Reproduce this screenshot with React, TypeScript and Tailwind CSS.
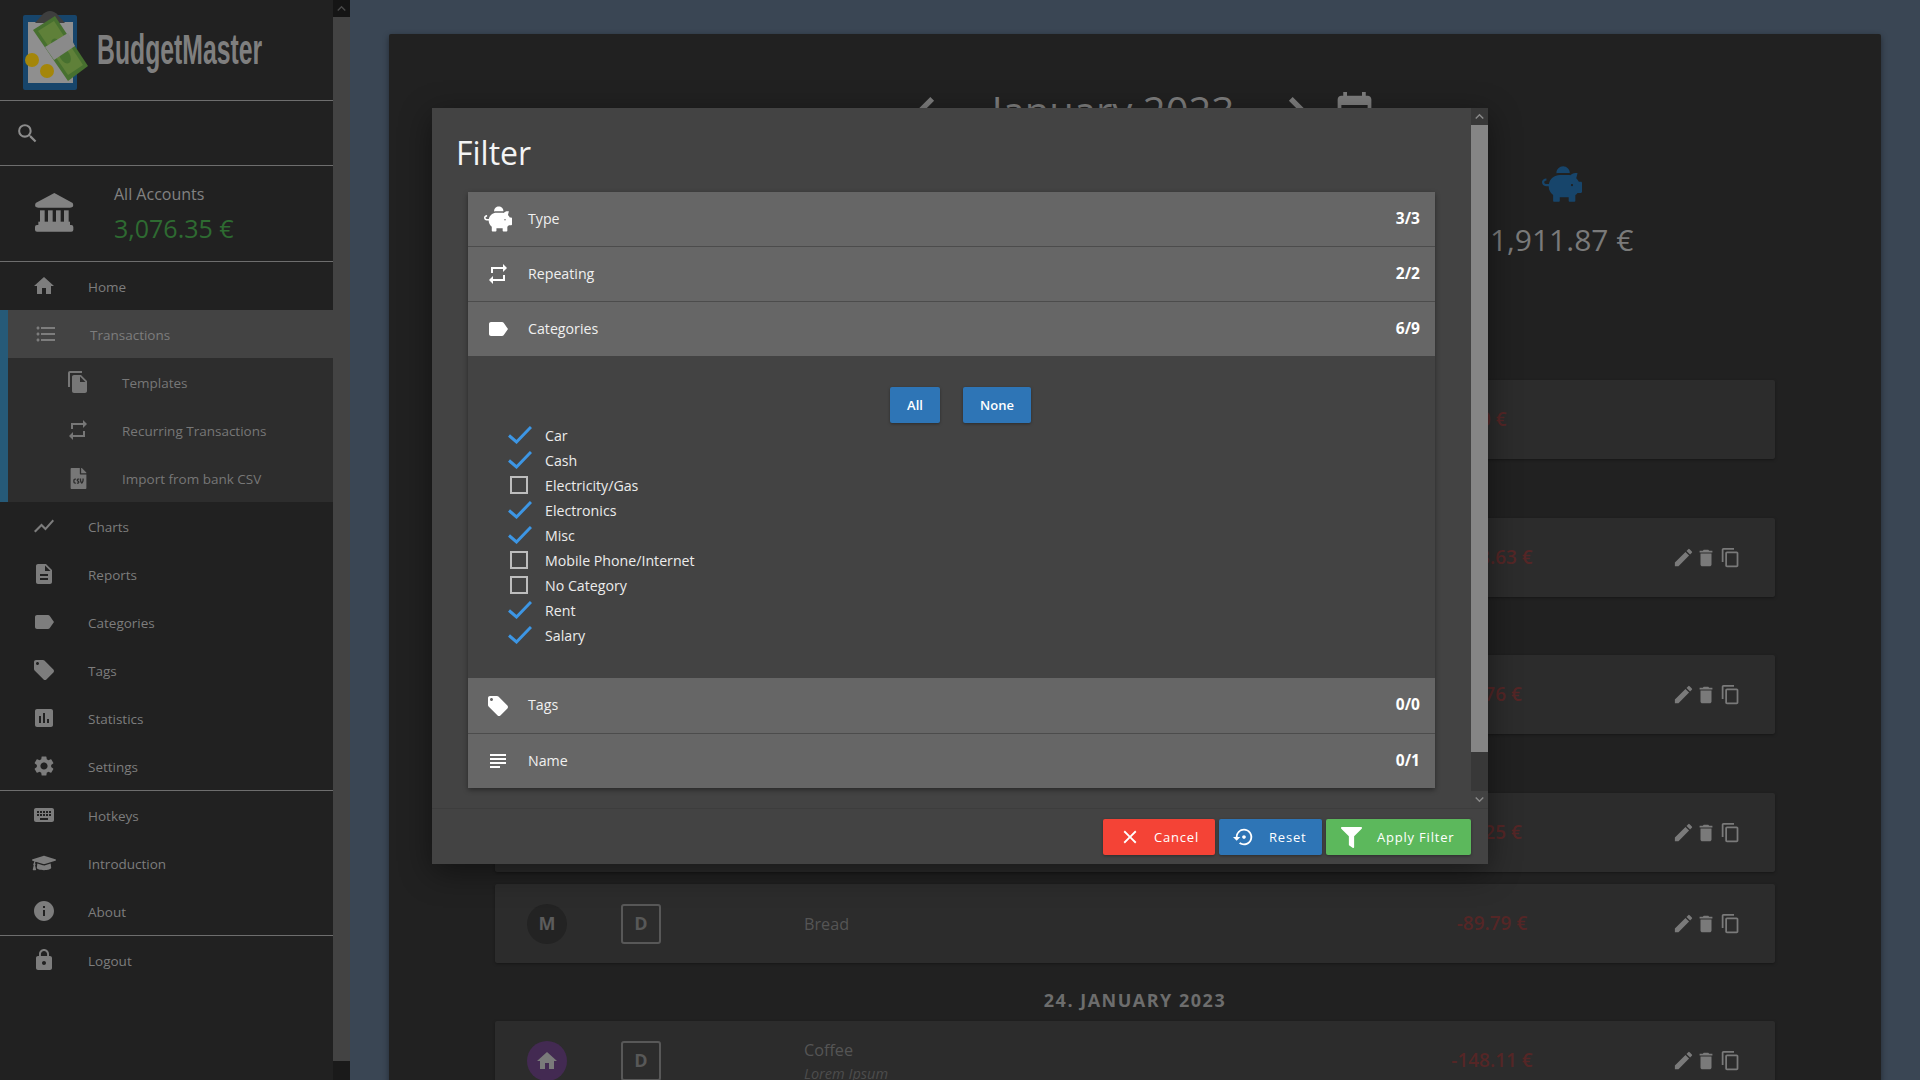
import React from "react";
import {
  MdHome, MdFormatListBulleted, MdFileCopy, MdRepeat, MdShowChart, MdDescription, MdLabel, MdLocalOffer,
  MdAssessment, MdSettings, MdKeyboard, MdInfo, MdLock, MdSearch, MdSubject, MdClose, MdSettingsBackupRestore,
  MdEdit, MdDelete, MdContentCopy, MdChevronLeft, MdChevronRight, MdEvent, MdKeyboardArrowUp, MdKeyboardArrowDown,
} from "react-icons/md";
import { FaPiggyBank, FaGraduationCap, FaFileCsv, FaFilter } from "react-icons/fa";

type Nav = { icon: React.ComponentType<{ size?: number; className?: string }>; label: string; size?: number };

const mainNav: Nav[] = [
  { icon: MdShowChart, label: "Charts" },
  { icon: MdDescription, label: "Reports" },
  { icon: MdLabel, label: "Categories" },
  { icon: MdLocalOffer, label: "Tags" },
  { icon: MdAssessment, label: "Statistics" },
  { icon: MdSettings, label: "Settings" },
];
const helpNav: Nav[] = [
  { icon: MdKeyboard, label: "Hotkeys" },
  { icon: FaGraduationCap, label: "Introduction", size: 26 },
  { icon: MdInfo, label: "About" },
];

function NavRow({ icon: Icon, label, size = 24 }: Nav) {
  return (
    <div className="flex h-12 items-center text-[13.5px] text-[#7d7d7d]">
      <div className="flex w-[88px] shrink-0 justify-center">
        <span className="flex w-6 justify-center"><Icon size={size} /></span>
      </div>
      <span className="pt-[2px]">{label}</span>
    </div>
  );
}

function SubRow({ icon: Icon, label, size = 24 }: Nav) {
  return (
    <div className="flex h-12 items-center pl-[66px] text-[13.5px] text-[#777777]">
      <span className="flex w-6 shrink-0 justify-center"><Icon size={size} /></span>
      <span className="ml-[32px] pt-[2px]">{label}</span>
    </div>
  );
}

function Logo() {
  return (
    <svg width="72" height="84" viewBox="20 8 72 84" className="shrink-0">
      <rect x="23" y="15" width="54" height="75" rx="2" fill="#17456b" />
      <rect x="28" y="22" width="45" height="61" fill="#8f8f8f" />
      <path d="M35 23 L42 15 Q50 7 58 15 L65 23 Z" fill="#3e3e3e" />
      <path d="M33 30 L55 16 L88 66 L68 81 Z" fill="#47702f" />
      <path d="M38 31 L54 21 L83 65 L68 75 Z" fill="#5f8039" />
      <ellipse cx="57" cy="46" rx="5" ry="8" fill="#47702f" transform="rotate(-30 57 46)" />
      <ellipse cx="65" cy="56" rx="5" ry="8" fill="#47702f" transform="rotate(-30 65 56)" />
      <path d="M45 47 L68 33 L75 46 L54 60 Z" fill="#8a8a8a" />
      <circle cx="32" cy="60" r="7" fill="#a4860a" />
      <circle cx="47" cy="71" r="7" fill="#a4860a" />
    </svg>
  );
}

function Bank() {
  return (
    <svg width="70" height="70" viewBox="0 0 210 210" className="shrink-0" fill="#828282">
      <path d="M103 42 L158 72 Q164 86 150 86 L55 86 Q41 86 47 72 Z" />
      <rect x="60" y="94" width="14" height="38" />
      <rect x="84" y="94" width="14" height="38" />
      <rect x="108" y="94" width="14" height="38" />
      <rect x="132" y="94" width="14" height="38" />
      <rect x="55" y="128" width="95" height="12" />
      <rect x="45" y="138" width="115" height="20" rx="6" />
    </svg>
  );
}

function Sidebar() {
  return (
    <aside className="flex h-full w-[350px] shrink-0">
      <nav className="w-[333px] shrink-0 bg-[#212121]">
        <div className="flex h-[101px] items-center overflow-hidden border-b border-[#6e6e6e] pl-[20px]">
          <Logo />
          <span className="ml-[5px] block origin-left scale-x-[0.59] font-['Liberation_Sans',sans-serif] text-[42px] leading-none font-bold whitespace-nowrap text-[#7f7f7f]">
            BudgetMaster
          </span>
        </div>
        <div className="flex h-[65px] items-center border-b border-[#6e6e6e] pl-[15px] text-[#8c8c8c]">
          <MdSearch size={25} />
        </div>
        <div className="flex h-[96px] items-center border-b border-[#6e6e6e] pl-[20px]">
          <Bank />
          <div className="ml-[24px] pb-[1px]">
            <div className="text-[16px] leading-[24px] text-[#828282]">All Accounts</div>
            <div className="mt-[5px] text-[25px] leading-[34px] text-[#2e6b31]">3,076.35 €</div>
          </div>
        </div>
        <NavRow icon={MdHome} label="Home" />
        <div className="border-l-[8px] border-[#265a78] bg-[#2d2d2d]">
          <div className="flex h-12 items-center bg-[#434343] text-[13.5px] text-[#7d7d7d]">
            <span className="ml-[26px] flex w-6 shrink-0 justify-center"><MdFormatListBulleted size={24} /></span>
            <span className="ml-[32px] pt-[2px]">Transactions</span>
          </div>
          <div className="-ml-[8px]">
            <SubRow icon={MdFileCopy} label="Templates" />
            <SubRow icon={MdRepeat} label="Recurring Transactions" />
            <SubRow icon={FaFileCsv} label="Import from bank CSV" size={21} />
          </div>
        </div>
        {mainNav.map((n) => <NavRow key={n.label} {...n} />)}
        <div className="border-t border-[#6e6e6e]">
          {helpNav.map((n) => <NavRow key={n.label} {...n} />)}
        </div>
        <div className="border-t border-[#6e6e6e]">
          <NavRow icon={MdLock} label="Logout" />
        </div>
      </nav>
      <div className="flex w-[17px] shrink-0 flex-col bg-[#434343]">
        <div className="flex h-[17px] items-center justify-center bg-[#151515] text-[#4a4a4a]"><MdKeyboardArrowUp size={17} /></div>
        <div className="flex-1" />
        <div className="h-[19px] bg-[#1a1a1a]" />
      </div>
    </aside>
  );
}

function Actions() {
  return (
    <div className="ml-[100px] flex items-center text-[#7a7a7a]">
      <MdEdit size={23} />
      <MdDelete size={22} />
      <MdContentCopy size={21} className="ml-[3px]" />
    </div>
  );
}

function Row({ cat, type = "D", name, note, amount, actions = true, catBg = "bg-[#232323]", shift = "" }: {
  cat?: React.ReactNode; type?: string; name?: string; note?: string; amount: string; actions?: boolean; catBg?: string; shift?: string;
}) {
  return (
    <div className="flex h-[79px] shrink-0 items-center rounded-[2px] bg-[#2c2c2c] pl-[32px] shadow-[0_1px_3px_rgba(0,0,0,0.35)]">
      {name ? (
        <>
          <div className={`flex h-10 w-10 shrink-0 items-center justify-center rounded-full text-[18px] font-bold text-[#5c5c5c] ${catBg}`}>{cat}</div>
          <div className="ml-[54px] flex h-10 w-10 shrink-0 items-center justify-center rounded-[3px] border-2 border-[#585858] text-[18px] font-bold text-[#585858]">{type}</div>
          <div className={`ml-[143px] w-[608px] shrink-0 ${note ? "pt-[3px]" : ""}`}>
            <div className="text-[16.2px] leading-[24px] text-[#555555]">{name}</div>
            {note && <div className="text-[14.5px] leading-[24px] text-[#4d4d4d] italic">{note}</div>}
          </div>
        </>
      ) : (
        <div className="w-[885px] shrink-0" />
      )}
      <div className={`w-[160px] shrink-0 text-center ${shift}`}>
        <span className="text-[19px] font-semibold whitespace-nowrap text-[#552626]">{amount}</span>
      </div>
      {actions && <Actions />}
    </div>
  );
}

function Main() {
  return (
    <main className="h-full min-w-0 flex-1 overflow-hidden bg-[#3a4654] px-[39px] pt-[34px]">
      <div className="h-[1100px] rounded-[2px] bg-[#212121] px-[106px] shadow-[0_2px_6px_rgba(0,0,0,0.4)]">
        <div className="flex h-[130px] items-start justify-center pt-[47px] text-[#7d7d7d]">
          <MdChevronLeft size={64} className="shrink-0" />
          <span className="mt-[4px] ml-[35px] text-[40px] leading-[52px] whitespace-nowrap">January 2023</span>
          <MdChevronRight size={64} className="ml-[32px] shrink-0" />
          <MdEvent size={45} className="mt-[9px] ml-[2px] shrink-0" />
        </div>
        <div className="grid h-[216px] grid-cols-3">
          <div className="col-start-3 flex flex-col items-center">
            <FaPiggyBank size={40} className="text-[#17456b]" />
            <span className="mt-[14px] text-[30px] leading-[44px] whitespace-nowrap text-[#7a7a7a]">1,911.87 €</span>
          </div>
        </div>
        <div className="flex flex-col">
          <Row amount="-500.00 €" actions={false} shift="pr-[52px]" />
          <div className="h-[59px] shrink-0" />
          <Row amount="-148.63 €" />
          <div className="h-[58px] shrink-0" />
          <Row amount="-9.76 €" />
          <div className="h-[59px] shrink-0" />
          <Row amount="-7.25 €" />
          <div className="h-3 shrink-0" />
          <Row cat="M" name="Bread" amount="-89.79 €" />
          <div className="flex h-[58px] shrink-0 items-center justify-center pt-[16px] text-[18px] font-bold tracking-[1.5px] text-[#6d6d6d] uppercase">
            24. January 2023
          </div>
          <Row cat={<MdHome size={24} className="text-[#7a7a7a]" />} catBg="bg-[#432a52]" name="Coffee" note="Lorem Ipsum" amount="-148.11 €" />
        </div>
      </div>
    </main>
  );
}

function Head({ icon: Icon, label, count, size = 24, height }: Nav & { count: string; height: string }) {
  return (
    <div className={`flex items-center bg-[#666666] pr-[15px] pl-[16px] text-[14.2px] text-[#f0f0f0] ${height}`}>
      <span className="flex w-7 justify-center text-white"><Icon size={size} /></span>
      <span className="ml-[16px] flex-1 pb-[1px]">{label}</span>
      <span className="pb-[1px] text-[15.5px] font-bold text-white">{count}</span>
    </div>
  );
}

const cats: [string, boolean][] = [
  ["Car", true], ["Cash", true], ["Electricity/Gas", false], ["Electronics", true], ["Misc", true],
  ["Mobile Phone/Internet", false], ["No Category", false], ["Rent", true], ["Salary", true],
];

function Check({ on }: { on: boolean }) {
  return (
    <span className="flex w-[24px] shrink-0">
      {on ? (
        <svg width="24" height="18" viewBox="0 0 24 18" fill="none">
          <path d="M1 9.5 L8.5 16 L23 1" stroke="#3d96e4" strokeWidth="3" />
        </svg>
      ) : (
        <span className="ml-[2px] block h-[18px] w-[18px] border-2 border-[#bdbdbd]" />
      )}
    </span>
  );
}

function FootBtn({ className, icon, label, gap }: { className: string; icon: React.ReactNode; label: string; gap: string }) {
  return (
    <button className={`flex h-9 items-center rounded-[2px] text-[13px] tracking-[0.8px] text-white shadow-[0_1px_3px_rgba(0,0,0,0.35)] ${className}`}>
      {icon}
      <span className={`pt-[2px] ${gap}`}>{label}</span>
    </button>
  );
}

function Dialog() {
  return (
    <div className="absolute top-[108px] left-[432px] flex h-[756px] w-[1056px] flex-col bg-[#434343] shadow-[0_8px_30px_rgba(0,0,0,0.45)]">
      <div className="flex h-[701px] border-b border-[#3d3d3d]">
        <div className="w-[1039px] shrink-0">
          <h1 className="h-[84px] pt-[23px] pl-[24px] text-[32px] leading-[44px] text-[#f4f4f4]">Filter</h1>
          <div className="ml-[36px] w-[967px] shadow-[0_2px_5px_rgba(0,0,0,0.4)]">
            <Head icon={FaPiggyBank} label="Type" count="3/3" size={28} height="h-[55px] border-b border-[#4c4c4c]" />
            <Head icon={MdRepeat} label="Repeating" count="2/2" height="h-[55px] border-b border-[#4c4c4c]" />
            <Head icon={MdLabel} label="Categories" count="6/9" height="h-[54px]" />
            <div className="h-[322px] pt-[31px]">
              <div className="flex justify-center gap-[23px] pl-[18px] text-[13px] font-semibold text-white">
                <button className="h-9 w-[50px] rounded-[2px] bg-[#2e75b6] pt-[1px] shadow-[0_1px_3px_rgba(0,0,0,0.35)]">All</button>
                <button className="h-9 w-[68px] rounded-[2px] bg-[#2e75b6] pt-[1px] shadow-[0_1px_3px_rgba(0,0,0,0.35)]">None</button>
              </div>
              <ul className="-mt-[1px] pl-[40px] text-[14.2px] text-[#ececec]">
                {cats.map(([c, on]) => (
                  <li key={c} className="flex h-[25px] items-center">
                    <Check on={on} />
                    <span className="ml-[13px] pt-[2px]">{c}</span>
                  </li>
                ))}
              </ul>
            </div>
            <Head icon={MdLocalOffer} label="Tags" count="0/0" height="h-[56px] border-b border-[#4c4c4c]" />
            <Head icon={MdSubject} label="Name" count="0/1" height="h-[54px]" />
          </div>
        </div>
        <div className="flex w-[17px] shrink-0 flex-col bg-[#383838] text-[#8a8a8a]">
          <div className="flex h-[17px] items-center justify-center"><MdKeyboardArrowUp size={17} /></div>
          <div className="h-[627px] bg-[#858585]" />
          <div className="flex-1" />
          <div className="flex h-[17px] items-center justify-center bg-[#424242]"><MdKeyboardArrowDown size={17} /></div>
        </div>
      </div>
      <div className="flex flex-1 justify-end gap-[4px] pt-[10px] pr-[17px]">
        <FootBtn className="w-[112px] bg-[#f44336] pl-[16px]" icon={<MdClose size={22} />} label="Cancel" gap="ml-[13px]" />
        <FootBtn className="w-[103px] bg-[#2e75b6] pl-[14px]" icon={<MdSettingsBackupRestore size={22} />} label="Reset" gap="ml-[14px]" />
        <FootBtn className="w-[145px] bg-[#5cb85c] pl-[15px]" icon={<FaFilter size={21} />} label="Apply Filter" gap="ml-[15px]" />
      </div>
    </div>
  );
}

export default function App() {
  return (
    <div className="relative flex h-[1080px] w-[1920px] overflow-hidden font-['Open_Sans',sans-serif]">
      <Sidebar />
      <Main />
      <Dialog />
    </div>
  );
}
